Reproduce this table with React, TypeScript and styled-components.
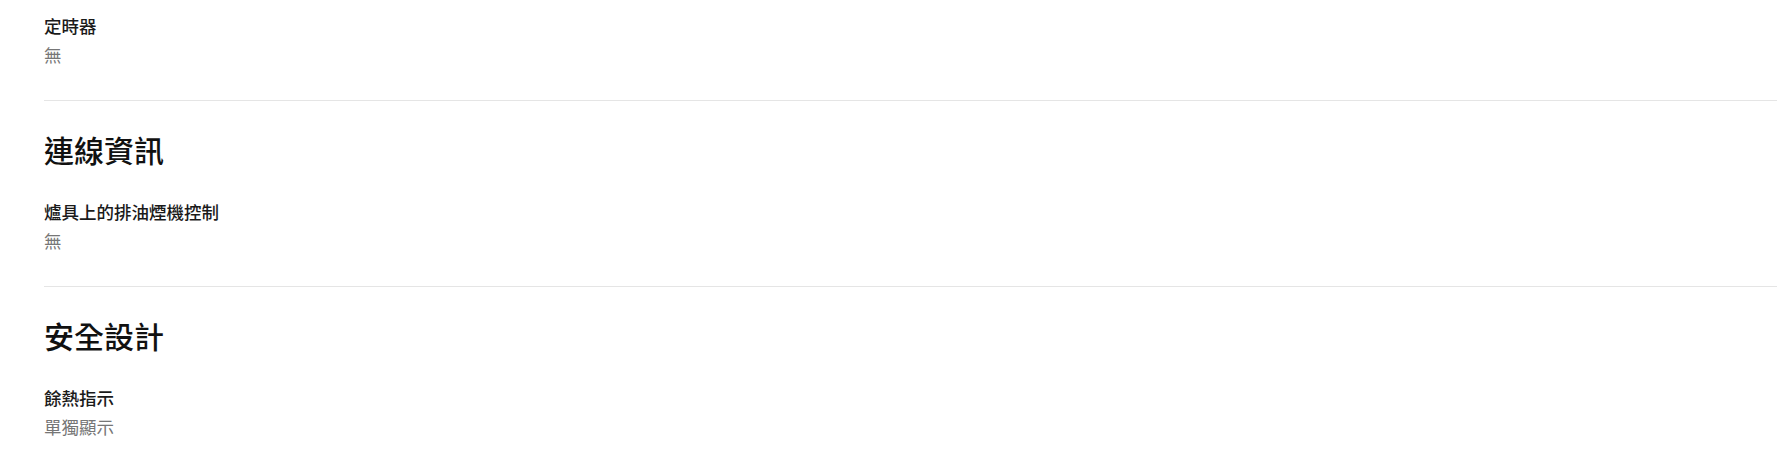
import React from 'react';
import styled, { createGlobalStyle } from 'styled-components';

const GlobalStyle = createGlobalStyle`
  html, body {
    margin: 0;
    padding: 0;
    background: #ffffff;
  }

  body {
    font-family: "Noto Sans CJK TC", "Noto Sans", sans-serif;
    color: #111111;
  }
`;

interface SpecField {
  label: string;
  value: string;
}

interface SpecGroup {
  title?: string;
  fields: SpecField[];
}

const groups: SpecGroup[] = [
  { fields: [{ label: '定時器', value: '無' }] },
  { title: '連線資訊', fields: [{ label: '爐具上的排油煙機控制', value: '無' }] },
  { title: '安全設計', fields: [{ label: '餘熱指示', value: '單獨顯示' }] },
];

const Page = styled.div`
  padding: 14px 0 0 44px;
`;

const Group = styled.section<{ $last?: boolean }>`
  display: flex;
  flex-direction: column;
  padding: ${p => (p.$last ? '0' : '0 0 33px')};
  border-bottom: ${p => (p.$last ? 'none' : '1px solid #e5e5e5')};

  & + & {
    padding-top: 28px;
  }
`;

const GroupTitle = styled.h2`
  margin: 0 0 31px;
  font-size: 30px;
  line-height: 40px;
  font-weight: 500;
  color: #111111;
`;

const Field = styled.div`
  display: flex;
  flex-direction: column;
  gap: 5px;
`;

const Label = styled.div`
  font-size: 17.5px;
  line-height: 24px;
  font-weight: 500;
  color: #1a1a1a;
`;

const Value = styled.div`
  font-size: 17.5px;
  line-height: 24px;
  font-weight: 400;
  color: #767676;
`;

export default function App() {
  return (
    <>
      <GlobalStyle />
      <Page>
        {groups.map((group, idx) => (
          <Group key={idx} $last={idx === groups.length - 1}>
            {group.title && <GroupTitle>{group.title}</GroupTitle>}
            {group.fields.map(field => (
              <Field key={field.label}>
                <Label>{field.label}</Label>
                <Value>{field.value}</Value>
              </Field>
            ))}
          </Group>
        ))}
      </Page>
    </>
  );
}
